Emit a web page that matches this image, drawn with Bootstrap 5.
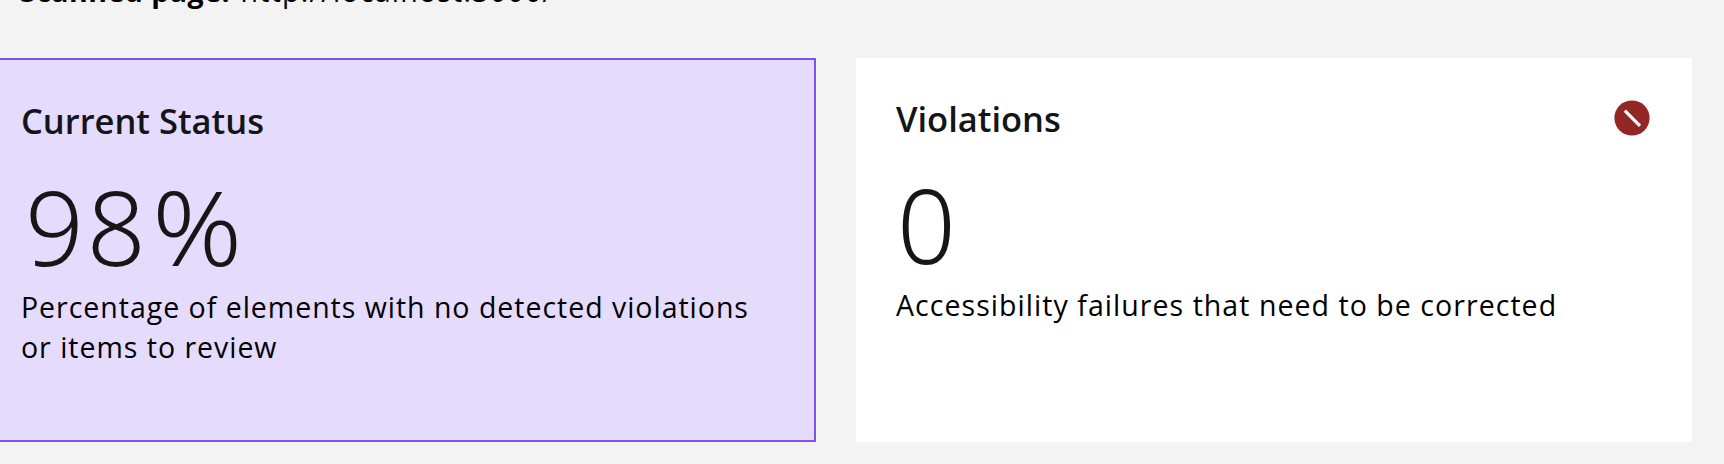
<!DOCTYPE html>
<html lang="en">
<head>
<meta charset="utf-8">
<meta name="viewport" content="width=device-width, initial-scale=1">
<title>Accessibility scan summary</title>
<link href="https://cdn.jsdelivr.net/npm/bootstrap@5.3.0/dist/css/bootstrap.min.css" rel="stylesheet">
<style>
  body { background: #f3f3f3; color: #000; font: 400 28.5px/40px "Open Sans", "Noto Sans", sans-serif; letter-spacing: .98px; }
  .report { margin: -29px 0 0 -20px; }
  .scanned { padding-left: 40px; margin-bottom: 47px; }
  .scanned strong { font-weight: 700; letter-spacing: .5px; margin-right: 2px; }
  .scanned span { letter-spacing: 1.25px; }
  .tiles { display: grid; grid-template-columns: 836px 836px; gap: 40px; }
  .tile { height: 384px; padding: 37px 40px 0; background: #fff; }
  .tile-status { background: #e5dbfd; border: 2px solid #8052f4; padding-left: 39px; }
  .tile-title { font-size: 34.5px; line-height: 48px; font-weight: 600; letter-spacing: 0; color: #121619; }
  .tile-count { font: 300 103px/104px "Noto Sans", "Open Sans", sans-serif; letter-spacing: 3px; color: #161616; margin: 29px 0 9px 1px; }
  .tile-status .tile-count { margin-left: 4px; }
  .tile-count .unit { font-size: 103px; margin-left: 3px; display: inline-block; transform: scaleX(1.08); transform-origin: left; }
  .violation-note { letter-spacing: 1.05px; }
  .violation-icon { width: 36px; height: 36px; margin: 5px 2px 0 0; }
</style>
</head>
<body class="overflow-hidden">
<main class="report">
  <div class="scanned text-nowrap"><strong>Scanned page:</strong> <span>http://localhost:3000/</span></div>
  <div class="tiles">
    <section class="tile tile-status">
      <h2 class="tile-title m-0">Current Status</h2>
      <div class="tile-count">98<span class="unit">%</span></div>
      <p class="m-0">Percentage of elements with no detected violations or items to review</p>
    </section>
    <section class="tile">
      <div class="d-flex justify-content-between align-items-start">
        <h2 class="tile-title m-0">Violations</h2>
        <svg class="violation-icon" viewBox="0 0 36 36" aria-hidden="true">
          <circle cx="18" cy="18" r="17.6" fill="#942626"/>
          <path d="M10.8 10.6 26 25.8" stroke="#fff" stroke-width="3.2"/>
        </svg>
      </div>
      <div class="tile-count">0</div>
      <p class="violation-note m-0">Accessibility failures that need to be corrected</p>
    </section>
  </div>
</main>
<script src="https://cdn.jsdelivr.net/npm/bootstrap@5.3.0/dist/js/bootstrap.bundle.min.js"></script>
</body>
</html>
